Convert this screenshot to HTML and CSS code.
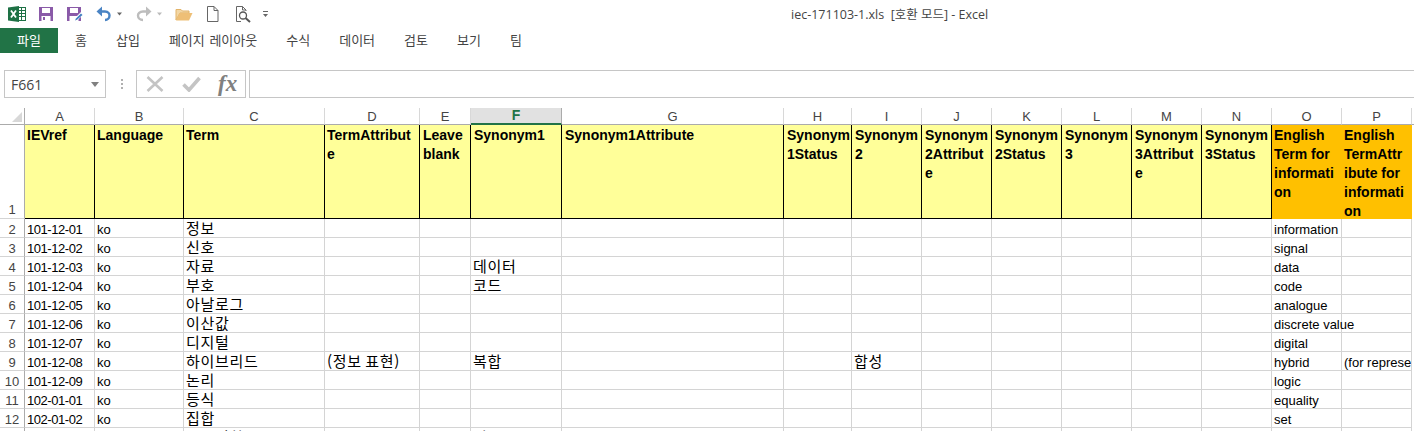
FILE: index.html
```html
<!DOCTYPE html>
<html lang="ko">
<head>
<meta charset="utf-8">
<title>iec-171103-1.xls [호환 모드] - Excel</title>
<link rel="stylesheet" href="styles.css">
</head>
<body>
<div class="app">
  <header class="titlebar">
    <svg class="qi q-excel" viewBox="0 0 18 18"><rect x="6.5" y="2.5" width="11" height="13" fill="#fff" stroke="#1e7145"/><path d="M10 5.500H17M10 8.500H17M10 11.500H17M13.500 3V15" stroke="#1e7145" fill="none"/><path d="M0 2.500L11 1V17L0 15.500Z" fill="#1e7145"/><path d="M3 5.500L8 12.500M8 5.500L3 12.500" stroke="#fff" stroke-width="1.800" fill="none"/></svg>
    <svg class="qi q-save" viewBox="0 0 16 18"><path d="M1 2H15V16H1Z" fill="#8a5aa8"/><rect x="4" y="3" width="8" height="5" fill="#fff"/><rect x="3.500" y="11" width="9" height="5" fill="#fff"/><rect x="5" y="12" width="2" height="3" fill="#8a5aa8"/></svg>
    <svg class="qi q-saveas" viewBox="0 0 17 18"><path d="M0 2H14V16H0Z" fill="#8a5aa8"/><rect x="3" y="3" width="8" height="5" fill="#fff"/><rect x="2.500" y="11" width="9" height="5" fill="#fff"/><path d="M7 16L8 13L14 7L16.500 9.500L10 15.500Z" fill="#fff"/><path d="M8 15.500L9 13.500L14 8.500L15.500 10L10 14.800Z" fill="#3f7fc1"/></svg>
    <svg class="qi q-undo" viewBox="0 0 15 18"><path d="M3 6.500H9C12.500 6.500 13.500 9 13.500 10.500C13.500 13 11.500 15 9 15" fill="none" stroke="#4a84c4" stroke-width="2.400"/><path d="M6 1.500V11.500L0.500 6.500Z" fill="#4a84c4"/></svg>
    <svg class="qi q-caret1" viewBox="0 0 7 18"><path d="M1 7.500H6L3.500 10.500Z" fill="#666"/></svg>
    <svg class="qi q-redo" viewBox="0 0 16 18"><path d="M12 6.500H7C3.500 6.500 2 9 2 10.500C2 13 4 15 7 15" fill="none" stroke="#bdbdbd" stroke-width="2.400"/><path d="M10 1.500V11.500L15.500 6.500Z" fill="#bdbdbd"/></svg>
    <svg class="qi q-caret2" viewBox="0 0 7 18"><path d="M1 7.500H6L3.500 10.500Z" fill="#bbb"/></svg>
    <svg class="qi q-folder" viewBox="0 0 18 18"><path d="M1 15V4.500H6L7.500 6H14V8H5L1 15Z" fill="#f2d6a4" stroke="#e2b368"/><path d="M1 15.500L4.500 8H17.500L14 15.500Z" fill="#eebf76"/></svg>
    <svg class="qi q-doc" viewBox="0 0 13 18"><path d="M1.500 1.500H8L12 5.500V16.500H1.500ZM8 1.500V5.500H12" fill="#fff" stroke="#666"/></svg>
    <svg class="qi q-preview" viewBox="0 0 16 18"><path d="M1.500 16.500V1.500H7.500L11 5V6M7.500 1.500V5H11M1.500 16.500H6" fill="none" stroke="#666"/><circle cx="8" cy="10.500" r="3.500" fill="#fff" stroke="#555" stroke-width="1.300"/><path d="M10.500 13L15 17" stroke="#555" stroke-width="2"/></svg>
    <svg class="qi q-custom" viewBox="0 0 7 18"><path d="M1 6.500H6" stroke="#666"/><path d="M1 9H6L3.500 12Z" fill="#666"/></svg>
    <div class="doc-title">iec-171103-1.xls&nbsp; [호환 모드] - Excel</div>
  </header>

  <nav class="tabs">
    <div class="tab-file">파일</div>
    <ul class="tab-list">
      <li>홈</li><li>삽입</li><li>페이지 레이아웃</li><li>수식</li><li>데이터</li><li>검토</li><li>보기</li><li>팀</li>
    </ul>
  </nav>

  <section class="formula">
    <div class="namebox"><span>F661</span><i class="name-caret"></i></div>
    <div class="grip"><b></b><b></b><b></b></div>
    <div class="fx-box">
      <svg class="fx-x" viewBox="0 0 18 16"><path d="M1.500 1L16.500 15M16.500 1L1.500 15" stroke="#c4c4c4" stroke-width="2.600" fill="none"/></svg>
      <svg class="fx-check" viewBox="0 0 19 16"><path d="M1.500 8.500L7 14L17.500 2" stroke="#c4c4c4" stroke-width="3.600" fill="none"/></svg>
      <span class="fx-label">fx</span>
    </div>
    <div class="fx-input"></div>
  </section>

  <section class="sheet">
    <table class="grid">
      <colgroup>
        <col class="c-rh"><col class="c-a"><col class="c-b"><col class="c-c"><col class="c-d"><col class="c-e"><col class="c-f"><col class="c-g"><col class="c-h"><col class="c-n"><col class="c-n"><col class="c-n"><col class="c-n"><col class="c-n"><col class="c-n"><col class="c-n"><col class="c-n"><col class="c-q">
      </colgroup>
      <thead>
        <tr>
          <th class="corner"><i></i></th><th>A</th><th>B</th><th>C</th><th>D</th><th>E</th><th class="sel">F</th><th>G</th><th>H</th><th>I</th><th>J</th><th>K</th><th>L</th><th>M</th><th>N</th><th>O</th><th>P</th><th class="last"></th>
        </tr>
      </thead>
      <tbody>
        <tr class="head-row">
          <td class="rh rh1">1</td>
          <td class="y"><div class="h">IEVref</div></td>
          <td class="y"><div class="h">Language</div></td>
          <td class="y"><div class="h">Term</div></td>
          <td class="y"><div class="h">TermAttribut<br>e</div></td>
          <td class="y"><div class="h">Leave<br>blank</div></td>
          <td class="y"><div class="h">Synonym1</div></td>
          <td class="y"><div class="h">Synonym1Attribute</div></td>
          <td class="y"><div class="h">Synonym<br>1Status</div></td>
          <td class="y"><div class="h">Synonym<br>2</div></td>
          <td class="y"><div class="h">Synonym<br>2Attribut<br>e</div></td>
          <td class="y"><div class="h">Synonym<br>2Status</div></td>
          <td class="y"><div class="h">Synonym<br>3</div></td>
          <td class="y"><div class="h">Synonym<br>3Attribut<br>e</div></td>
          <td class="y"><div class="h">Synonym<br>3Status</div></td>
          <td class="o"><div class="h">English<br>Term for<br>informati<br>on</div></td>
          <td class="o"><div class="h">English<br>TermAttr<br>ibute for<br>informati<br>on</div></td>
          <td class="blank"></td>
        </tr>
        <tr><td class="rh">2</td><td class="id">101-12-01</td><td>ko</td><td class="ko">정보</td><td></td><td></td><td></td><td></td><td></td><td></td><td></td><td></td><td></td><td></td><td></td><td>information</td><td></td><td class="blank"></td></tr>
        <tr><td class="rh">3</td><td class="id">101-12-02</td><td>ko</td><td class="ko">신호</td><td></td><td></td><td></td><td></td><td></td><td></td><td></td><td></td><td></td><td></td><td></td><td>signal</td><td></td><td class="blank"></td></tr>
        <tr><td class="rh">4</td><td class="id">101-12-03</td><td>ko</td><td class="ko">자료</td><td></td><td></td><td class="ko">데이터</td><td></td><td></td><td></td><td></td><td></td><td></td><td></td><td></td><td>data</td><td></td><td class="blank"></td></tr>
        <tr><td class="rh">5</td><td class="id">101-12-04</td><td>ko</td><td class="ko">부호</td><td></td><td></td><td class="ko">코드</td><td></td><td></td><td></td><td></td><td></td><td></td><td></td><td></td><td>code</td><td></td><td class="blank"></td></tr>
        <tr><td class="rh">6</td><td class="id">101-12-05</td><td>ko</td><td class="ko">아날로그</td><td></td><td></td><td></td><td></td><td></td><td></td><td></td><td></td><td></td><td></td><td></td><td>analogue</td><td></td><td class="blank"></td></tr>
        <tr><td class="rh">7</td><td class="id">101-12-06</td><td>ko</td><td class="ko">이산값</td><td></td><td></td><td></td><td></td><td></td><td></td><td></td><td></td><td></td><td></td><td></td><td>discrete value</td><td></td><td class="blank"></td></tr>
        <tr><td class="rh">8</td><td class="id">101-12-07</td><td>ko</td><td class="ko">디지털</td><td></td><td></td><td></td><td></td><td></td><td></td><td></td><td></td><td></td><td></td><td></td><td>digital</td><td></td><td class="blank"></td></tr>
        <tr><td class="rh">9</td><td class="id">101-12-08</td><td>ko</td><td class="ko">하이브리드</td><td class="ko">(정보 표현)</td><td></td><td class="ko">복합</td><td></td><td></td><td class="ko">합성</td><td></td><td></td><td></td><td></td><td></td><td>hybrid</td><td class="clip">(for representation of information)</td><td class="blank"></td></tr>
        <tr><td class="rh">10</td><td class="id">101-12-09</td><td>ko</td><td class="ko">논리</td><td></td><td></td><td></td><td></td><td></td><td></td><td></td><td></td><td></td><td></td><td></td><td>logic</td><td></td><td class="blank"></td></tr>
        <tr><td class="rh">11</td><td class="id">102-01-01</td><td>ko</td><td class="ko">등식</td><td></td><td></td><td></td><td></td><td></td><td></td><td></td><td></td><td></td><td></td><td></td><td>equality</td><td></td><td class="blank"></td></tr>
        <tr><td class="rh">12</td><td class="id">102-01-02</td><td>ko</td><td class="ko">집합</td><td></td><td></td><td></td><td></td><td></td><td></td><td></td><td></td><td></td><td></td><td></td><td>set</td><td></td><td class="blank"></td></tr>
        <tr><td class="rh"></td><td></td><td></td><td class="ko">부분집합</td><td></td><td></td><td class="ko">원소</td><td></td><td></td><td></td><td></td><td></td><td></td><td></td><td></td><td></td><td></td><td class="blank"></td></tr>
      </tbody>
    </table>
  </section>
</div>
</body>
</html>
```

FILE: styles.css
```css
* { box-sizing: border-box; }
html, body { margin: 0; padding: 0; background: #fff; }
body { overflow: hidden; }

.app {
  width: 1414px;
  height: 431px;
  overflow: hidden;
  font-family: "Liberation Sans", Arial, sans-serif;
  color: #000;
}

/* Title bar / quick access toolbar */
.titlebar {
  display: flex;
  align-items: flex-start;
  height: 28px;
  padding: 5px 0 0 8px;
}
.qi { display: block; height: 18px; flex: none; }
.q-excel { width: 18px; }
.q-save { width: 16px; margin-left: 12px; }
.q-saveas { width: 17px; margin-left: 13px; }
.q-undo { width: 15px; margin-left: 12px; }
.q-caret1 { width: 7px; margin-left: 5px; }
.q-redo { width: 16px; margin-left: 13px; }
.q-caret2 { width: 7px; margin-left: 4px; }
.q-folder { width: 18px; margin-left: 12px; }
.q-doc { width: 13px; margin-left: 13px; }
.q-preview { width: 16px; margin-left: 16px; }
.q-custom { width: 7px; margin-left: 11px; }
.doc-title {
  margin-left: 522px;
  font: 12.5px/20px "Open Sans", "Noto Sans CJK KR", sans-serif;
  color: #444;
  white-space: nowrap;
}

/* Ribbon tabs */
.tabs { display: flex; height: 25px; }
.tab-file {
  width: 58px;
  background: #217346;
  color: #fff;
  text-align: center;
  font: 13px/24px "Noto Sans CJK KR", sans-serif;
}
.tab-list {
  display: flex;
  gap: 29px;
  margin: 0;
  padding: 0 0 0 17px;
  list-style: none;
  font: 13px/23px "Noto Sans CJK KR", sans-serif;
  word-spacing: 1px;
  color: #444;
  white-space: nowrap;
}

/* Formula bar */
.formula {
  display: flex;
  height: 28px;
  margin-top: 17px;
  padding-left: 4px;
}
.namebox {
  display: flex;
  align-items: center;
  justify-content: space-between;
  width: 102px;
  padding: 0 6px 0 6px;
  border: 1px solid #c6c6c6;
  font: 14px "Open Sans", sans-serif;
  color: #444;
}
.name-caret {
  width: 0;
  height: 0;
  border-style: solid;
  border-width: 5px 4px 0;
  border-color: #808080 transparent transparent;
}
.grip {
  display: flex;
  flex-direction: column;
  justify-content: center;
  gap: 2px;
  width: 30px;
  padding-left: 15px;
}
.grip b { display: block; width: 2px; height: 2px; background: #b0b0b0; }
.fx-box {
  display: flex;
  align-items: center;
  width: 110px;
  padding-left: 9px;
  border: 1px solid #c6c6c6;
}
.fx-x { width: 18px; height: 16px; }
.fx-check { width: 19px; height: 16px; margin-left: 18px; }
.fx-label {
  margin-left: 17px;
  font: italic bold 23px/24px "Liberation Serif", serif;
  color: #808080;
}
.fx-input {
  flex: 1;
  margin-left: 3px;
  border: 1px solid #c6c6c6;
  border-right: 0;
}

/* Sheet grid */
.sheet { margin-top: 10px; }
.grid {
  width: 1414px;
  table-layout: fixed;
  border-collapse: separate;
  border-spacing: 0;
  font-size: 13px;
}
.c-rh { width: 25px; }
.c-a { width: 70px; }
.c-b { width: 89px; }
.c-c { width: 141px; }
.c-d { width: 95px; }
.c-e { width: 51px; }
.c-f { width: 91px; }
.c-g { width: 222px; }
.c-h { width: 68px; }
.c-n { width: 70px; }
.c-q { width: 2px; }

.grid th {
  height: 17px;
  padding: 0;
  border-right: 1px solid #d8d8d8;
  border-bottom: 1px solid #ababab;
  font: 13px/15px "Liberation Sans", sans-serif;
  color: #444;
  text-align: center;
  vertical-align: middle;
}
.grid th.last { border-right: 0; }
.grid th.corner { position: relative; border-right-color: #ababab; }
.corner i {
  position: absolute;
  left: 12px;
  bottom: 2px;
  width: 0;
  height: 0;
  border-style: solid;
  border-width: 0 0 10px 10px;
  border-color: transparent transparent #d8d8d8;
}
.grid th.sel {
  background: #e1e1e1;
  border-right-color: #ababab;
  border-bottom: 2px solid #217346;
  color: #217346;
  font-weight: bold;
  font-size: 14px;
}

.grid td {
  height: 19px;
  padding: 0 0 0 2px;
  border-right: 1px solid #d4d4d4;
  border-bottom: 1px solid #d4d4d4;
  line-height: 14px;
  white-space: nowrap;
  vertical-align: bottom;
}
.grid td.id { letter-spacing: -0.45px; }
.grid td.clip { overflow: hidden; }
.grid td.ko {
  font: 15px/18px "Noto Sans CJK KR", sans-serif;
  letter-spacing: 0.7px;
  word-spacing: -1.500px;
}
.grid td.rh {
  padding: 0;
  border-right-color: #ababab;
  color: #444;
  text-align: center;
  font-size: 13px;
}
.grid td.rh1 { line-height: 16px; }
.grid td.blank { padding: 0; border: 0; }

.grid td.y { background: #ffff99; border-color: #000; vertical-align: top; padding: 0; }
.grid td.o { background: #ffc000; border-color: #ffc000; vertical-align: top; padding: 0; }
.h {
  height: 93px;
  overflow: hidden;
  padding: 1px 0 0 2px;
  font-size: 14px;
  font-weight: bold;
  line-height: 19px;
}
.y:nth-child(n+6) .h { padding-left: 3px; }
```
